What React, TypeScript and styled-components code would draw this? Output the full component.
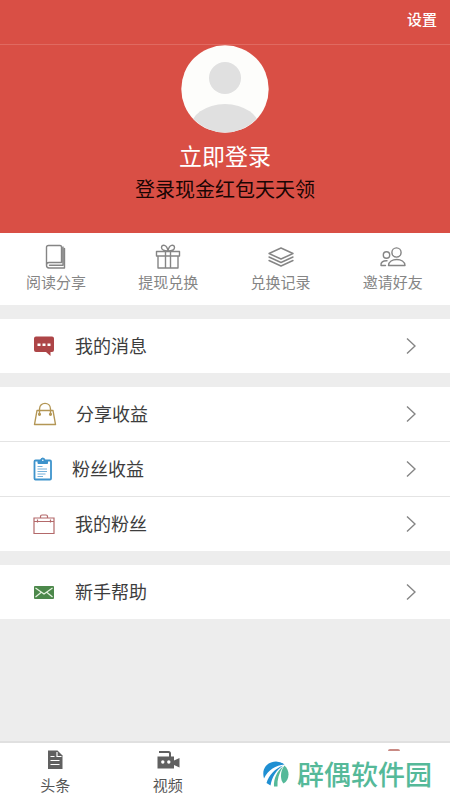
import React from "react";
import styled, { createGlobalStyle } from "styled-components";

const GlobalStyle = createGlobalStyle`
  * { box-sizing: border-box; }
  body {
    margin: 0;
    background: #ededed;
    font-family: "Noto Sans CJK SC", "Noto Sans", sans-serif;
  }
  button { font: inherit; border: 0; background: none; padding: 0; cursor: pointer; }
  a { color: inherit; text-decoration: none; }
  svg { display: block; flex: none; }
`;

const Page = styled.div`
  min-height: 100vh;
  display: flex;
  flex-direction: column;
`;

const TopBar = styled.header`
  display: flex;
  justify-content: flex-end;
  align-items: center;
  height: 45px;
  padding: 0 13px 6px;
  background: #d94f45;
  border-bottom: 1px solid #e06a61;
`;

const SettingsButton = styled.button`
  color: #fff;
  font-size: 15px;
  line-height: 20px;
  font-weight: 500;
`;

const Hero = styled.section`
  display: flex;
  flex-direction: column;
  align-items: center;
  height: 188px;
  background: #d94f45;
`;

const LoginButton = styled.button`
  display: flex;
  flex-direction: column;
  align-items: center;
  gap: 6px;
  color: #fff;
  font-size: 23px;
  line-height: 32px;
`;

const Slogan = styled.p`
  margin: 2px 0 0;
  color: #1a0503;
  font-size: 20px;
  line-height: 32px;
`;

const QuickLinks = styled.nav`
  display: grid;
  grid-template-columns: repeat(4, 1fr);
  height: 72px;
  padding: 10px 1px 0 0;
  background: #fff;
`;

const QuickLink = styled.a`
  display: flex;
  flex-direction: column;
  align-items: center;
  gap: 1px;
  color: #858585;
  font-size: 15px;
  line-height: 24px;
`;

const Groups = styled.main`
  display: flex;
  flex-direction: column;
  flex: 1;
  gap: 14px;
  padding: 14px 0;
`;

const Group = styled.div`
  background: #fff;
`;

const Row = styled.a`
  display: flex;
  align-items: center;
  height: 54px;
  padding: 0 34px 0 33px;
  color: #3d3d3d;
  font-size: 18px;
  line-height: 26px;

  & + & {
    height: 55px;
    border-top: 1px solid #e4e4e4;
  }
`;

const RowLabel = styled.span<{ $gap: number }>`
  flex: 1;
  padding: 0 0 2px ${(p) => p.$gap}px;
`;

const TabBar = styled.footer`
  display: grid;
  grid-template-columns: 1fr 1fr 2fr;
  height: 59px;
  background: #fff;
  border-top: 2px solid #e0e0e0;
`;

const Tab = styled.a`
  display: flex;
  flex-direction: column;
  align-items: center;
  gap: 3px;
  padding: 6px 2px 0 0;
  color: #555;
  font-size: 15px;
  line-height: 22px;
`;

const Brand = styled.a`
  position: relative;
  display: flex;
  align-items: center;
  justify-content: flex-end;
  gap: 8px;
  padding: 5px 18px 0 0;
  color: #55b999;
  font-size: 27px;
  line-height: 36px;
  font-weight: 500;
`;

const BrandAccent = styled.span`
  position: absolute;
  top: 6px;
  right: 50px;
  width: 12px;
  height: 2px;
  border-radius: 6px 6px 0 0;
  background: #c98a84;
`;

const Avatar = () => (
  <svg width="88" height="88" viewBox="0 0 88 88" aria-hidden="true">
    <defs>
      <clipPath id="face"><circle cx="44" cy="44" r="43.5" /></clipPath>
    </defs>
    <circle cx="44" cy="44" r="43.7" fill="#fdfdfb" />
    <circle cx="44" cy="33" r="16" fill="#e0e0e0" />
    <ellipse cx="44" cy="84" rx="35" ry="25" fill="#e0e0e0" clipPath="url(#face)" />
  </svg>
);

const Line = ({ children }: { children: React.ReactNode }) => (
  <svg width="28" height="26" viewBox="0 0 28 26" fill="none" stroke="#858585"
    strokeWidth="1.4" strokeLinecap="round" strokeLinejoin="round" aria-hidden="true">
    {children}
  </svg>
);

const quickLinks = [
  {
    label: "阅读分享",
    icon: (
      <Line>
        <path d="M4.500 22V4.500Q4.500 2.500 6.500 2.500H18Q19.500 2.500 19.500 4V19.500H7Q4.500 19.500 4.500 22.200T7 25H22.500V5.500M7.500 22.300H21V4" />
      </Line>
    ),
  },
  {
    label: "提现兑换",
    icon: (
      <Line>
        <path d="M2.500 8.500H25.500V13H2.500ZM4 13V25H24V13M11.500 8.500V25M16.500 8.500V25M14 8C10 8 7.500 6.500 7.500 4.500C7.500 1 13 1 14 8C15 1 20.500 1 20.500 4.500C20.500 6.500 18 8 14 8Z" />
      </Line>
    ),
  },
  {
    label: "兑换记录",
    icon: (
      <Line>
        <path d="M14 5L26 10.500L14 16L2 10.500ZM2 14L14 19.500L26 14M2 17.500L14 23L26 17.500" />
      </Line>
    ),
  },
  {
    label: "邀请好友",
    icon: (
      <Line>
        <circle cx="17.500" cy="9.500" r="4.600" />
        <circle cx="7.500" cy="12" r="3.200" />
        <path d="M9.500 22.500C9.500 14.500 26 14.500 26 22.500ZM6.500 22.500H2C1.500 19.500 4 17.500 8 17.700" />
      </Line>
    ),
  },
];

const MessageIcon = () => (
  <svg width="22" height="22" viewBox="0 0 22 22" aria-hidden="true">
    <path d="M3 1.500H19Q21 1.500 21 3.500V15Q21 17 19 17H17.500V21L13 17H3Q1 17 1 15V3.500Q1 1.500 3 1.500Z" fill="#ad4547" />
    <path d="M4.500 8.500H7.500V11H4.500ZM9.500 8.500H12.500V11H9.500ZM14.500 8.500H17.500V11H14.500Z" fill="#fff" />
  </svg>
);

const BagIcon = () => (
  <svg width="24" height="24" viewBox="0 0 24 24" fill="none" stroke="#b39655" strokeWidth="1.400" aria-hidden="true">
    <path d="M4 8.500H20L22.500 22.500H1.500ZM6.500 12V7C6.500 -0.500 17.500 -0.500 17.500 7V12" strokeLinejoin="round" />
    <circle cx="6.500" cy="12.300" r="0.900" fill="#b39655" />
    <circle cx="17.500" cy="12.300" r="0.900" fill="#b39655" />
  </svg>
);

const ClipboardIcon = () => (
  <svg width="20" height="24" viewBox="0 0 20 24" fill="none" stroke="#3d93cc" aria-hidden="true">
    <rect x="1.500" y="3.500" width="16.500" height="19" rx="1" strokeWidth="1.800" />
    <path d="M5 6.500V4H7.500Q7.500 1 9.800 1T12 4H14.500V6.500Z" fill="#3d93cc" />
    <circle cx="9.800" cy="3.300" r="0.800" fill="#fff" stroke="none" />
    <path d="M4.500 9.500H9.500M4.500 12H14M4.500 14.500H14M4.500 17H12.500M4.500 19.500H10" strokeWidth="0.900" opacity="0.800" />
  </svg>
);

const CaseIcon = () => (
  <svg width="22" height="22" viewBox="0 0 22 22" fill="none" stroke="#b3696a" strokeWidth="1.200" aria-hidden="true">
    <path d="M1 5H21V20.500H1ZM1 8.500H21M7.500 5V3.500Q7.500 2 9 2H13Q14.500 2 14.500 3.500V5M4.500 6.500V9.500M17.500 6.500V9.500" />
  </svg>
);

const MailIcon = () => (
  <svg width="22" height="22" viewBox="0 0 22 22" aria-hidden="true">
    <rect x="1" y="5" width="20" height="13" rx="1" fill="#4c884b" />
    <path d="M2.500 7L11 13L19.500 7M2.500 16L8 11.500M19.500 16L14 11.500" fill="none" stroke="#e5f2df" strokeWidth="1.200" />
  </svg>
);

const Chevron = () => (
  <svg width="10" height="18" viewBox="0 0 10 18" fill="none" stroke="#858585" strokeWidth="1.400" aria-hidden="true">
    <path d="M1 1.500L9 9L1 16.500" />
  </svg>
);

const groups = [
  [{ label: "我的消息", icon: <MessageIcon />, gap: 20 }],
  [
    { label: "分享收益", icon: <BagIcon />, gap: 19 },
    { label: "粉丝收益", icon: <ClipboardIcon />, gap: 19 },
    { label: "我的粉丝", icon: <CaseIcon />, gap: 20 },
  ],
  [{ label: "新手帮助", icon: <MailIcon />, gap: 20 }],
];

const NewsIcon = () => (
  <svg width="20" height="22" viewBox="0 0 20 22" aria-hidden="true">
    <path d="M3 1.500H12.500L17.500 6.500V20H3Z" fill="#606060" />
    <path d="M12 3V7.500H16.500M5.500 7.500H9.500M5.500 11.500H14.500M5.500 15.500H14.500" fill="none" stroke="#fff" strokeWidth="1.200" />
  </svg>
);

const VideoIcon = () => (
  <svg width="24" height="22" viewBox="0 0 24 22" aria-hidden="true">
    <path d="M1.500 7.500H18V11.500L23.500 9V18.500L18 16V19.500H1.500Z" fill="#606060" />
    <path d="M3 3H12.500Q14 3 14 4.500V8" fill="none" stroke="#606060" strokeWidth="2" />
    <circle cx="6.800" cy="13" r="1.700" fill="#fff" />
    <circle cx="12.800" cy="13" r="1.700" fill="#fff" />
  </svg>
);

const BrandIcon = () => (
  <svg width="26" height="26" viewBox="0 0 26 26" aria-hidden="true">
    <path d="M1 17.500C-2 7 5 0.500 13 0.500Q18 0.500 21.500 3.500C13 4 5 9 1 17.500Z" fill="#1f8fd2" />
    <path d="M3.500 22C6 14 12 7.500 20 4.500C13 9.500 9 16 7.500 24.500Z" fill="#1f8fd2" />
    <path d="M11 25.500C10.500 18 14 10 20 5.500C16 12 14 19 14.500 25.500Z" fill="#55b999" />
    <path d="M21.500 4.500C27.500 10 26.500 19 20.500 22.500C16.500 18 17.500 9.500 21.500 4.500Z" fill="#55b999" />
  </svg>
);

export default function App() {
  return (
    <Page>
      <GlobalStyle />
      <TopBar>
        <SettingsButton type="button">设置</SettingsButton>
      </TopBar>
      <Hero>
        <LoginButton type="button">
          <Avatar />
          立即登录
        </LoginButton>
        <Slogan>登录现金红包天天领</Slogan>
      </Hero>
      <QuickLinks>
        {quickLinks.map((q) => (
          <QuickLink href="#" key={q.label}>
            {q.icon}
            {q.label}
          </QuickLink>
        ))}
      </QuickLinks>
      <Groups>
        {groups.map((rows, i) => (
          <Group key={i}>
            {rows.map((r) => (
              <Row href="#" key={r.label}>
                {r.icon}
                <RowLabel $gap={r.gap}>{r.label}</RowLabel>
                <Chevron />
              </Row>
            ))}
          </Group>
        ))}
      </Groups>
      <TabBar>
        <Tab href="#">
          <NewsIcon />
          头条
        </Tab>
        <Tab href="#">
          <VideoIcon />
          视频
        </Tab>
        <Brand href="#">
          <BrandAccent />
          <BrandIcon />
          辟偶软件园
        </Brand>
      </TabBar>
    </Page>
  );
}
